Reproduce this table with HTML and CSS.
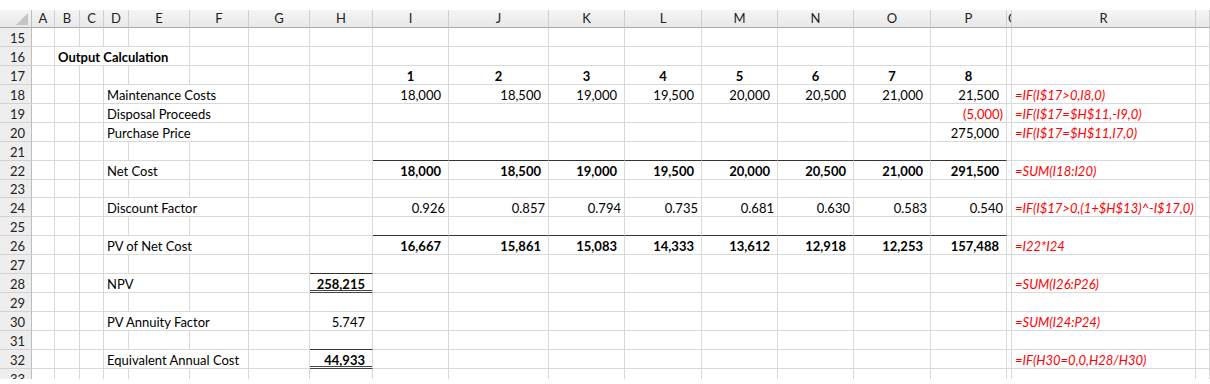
FILE: index.html
```html
<!DOCTYPE html>
<html>
<head>
<meta charset="utf-8">
<link rel="stylesheet" href="styles.css">
</head>
<body>
<div class="frame">
<table class="sheet">
<colgroup>
<col class="c-rh"><col class="c-a"><col class="c-b"><col class="c-c"><col class="c-d"><col class="c-e"><col class="c-f"><col class="c-g"><col class="c-h"><col class="c-i"><col class="c-j"><col class="c-k"><col class="c-l"><col class="c-m"><col class="c-n"><col class="c-o"><col class="c-p"><col class="c-q"><col class="c-r"><col class="c-z">
</colgroup>
<thead>
<tr class="hdr">
<th class="corner"><svg class="tri" width="12" height="12" viewBox="0 0 12 12"><polygon points="12,0 12,12 0,12" fill="#c4c4c4"/></svg></th>
<th>A</th><th>B</th><th>C</th><th>D</th><th>E</th><th>F</th><th>G</th><th>H</th><th>I</th><th>J</th><th>K</th><th>L</th><th>M</th><th>N</th><th>O</th><th>P</th><th class="qh">Q</th><th>R</th><th></th>
</tr>
</thead>
<tbody>
<tr><th>15</th><td></td><td></td><td></td><td></td><td></td><td></td><td></td><td></td><td></td><td></td><td></td><td></td><td></td><td></td><td></td><td></td><td></td><td></td><td></td></tr>
<tr><th>16</th><td></td><td colspan="4" class="b">Output Calculation</td><td></td><td></td><td></td><td></td><td></td><td></td><td></td><td></td><td></td><td></td><td></td><td></td><td></td><td></td></tr>
<tr><th>17</th><td></td><td></td><td></td><td></td><td></td><td></td><td></td><td></td><td class="yr">1</td><td class="yr">2</td><td class="yr">3</td><td class="yr">4</td><td class="yr">5</td><td class="yr">6</td><td class="yr">7</td><td class="yr">8</td><td></td><td></td><td></td></tr>
<tr><th>18</th><td></td><td></td><td></td><td colspan="3">Maintenance Costs</td><td></td><td></td><td class="num">18,000</td><td class="num">18,500</td><td class="num">19,000</td><td class="num">19,500</td><td class="num">20,000</td><td class="num">20,500</td><td class="num">21,000</td><td class="num">21,500</td><td></td><td class="f">=IF(I$17&gt;0,I8,0)</td><td></td></tr>
<tr><th>19</th><td></td><td></td><td></td><td colspan="3">Disposal Proceeds</td><td></td><td></td><td></td><td></td><td></td><td></td><td></td><td></td><td></td><td class="neg">(5,000)</td><td></td><td class="f">=IF(I$17=$H$11,-I9,0)</td><td></td></tr>
<tr><th>20</th><td></td><td></td><td></td><td colspan="3">Purchase Price</td><td></td><td></td><td></td><td></td><td></td><td></td><td></td><td></td><td></td><td class="num">275,000</td><td></td><td class="f">=IF(I$17=$H$11,I7,0)</td><td></td></tr>
<tr><th>21</th><td></td><td></td><td></td><td></td><td></td><td></td><td></td><td></td><td class="bb"></td><td class="bb"></td><td class="bb"></td><td class="bb"></td><td class="bb"></td><td class="bb"></td><td class="bb"></td><td class="bb"></td><td></td><td></td><td></td></tr>
<tr><th>22</th><td></td><td></td><td></td><td colspan="2">Net Cost</td><td></td><td></td><td></td><td class="num b">18,000</td><td class="num b">18,500</td><td class="num b">19,000</td><td class="num b">19,500</td><td class="num b">20,000</td><td class="num b">20,500</td><td class="num b">21,000</td><td class="num b">291,500</td><td></td><td class="f">=SUM(I18:I20)</td><td></td></tr>
<tr><th>23</th><td></td><td></td><td></td><td></td><td></td><td></td><td></td><td></td><td></td><td></td><td></td><td></td><td></td><td></td><td></td><td></td><td></td><td></td><td></td></tr>
<tr><th>24</th><td></td><td></td><td></td><td colspan="3">Discount Factor</td><td></td><td></td><td class="df">0.926</td><td class="df">0.857</td><td class="df">0.794</td><td class="df">0.735</td><td class="df">0.681</td><td class="df">0.630</td><td class="df">0.583</td><td class="df">0.540</td><td></td><td class="f">=IF(I$17&gt;0,(1+$H$13)^-I$17,0)</td><td></td></tr>
<tr><th>25</th><td></td><td></td><td></td><td></td><td></td><td></td><td></td><td></td><td class="bb"></td><td class="bb"></td><td class="bb"></td><td class="bb"></td><td class="bb"></td><td class="bb"></td><td class="bb"></td><td class="bb"></td><td></td><td></td><td></td></tr>
<tr><th>26</th><td></td><td></td><td></td><td colspan="3">PV of Net Cost</td><td></td><td></td><td class="num b">16,667</td><td class="num b">15,861</td><td class="num b">15,083</td><td class="num b">14,333</td><td class="num b">13,612</td><td class="num b">12,918</td><td class="num b">12,253</td><td class="num b">157,488</td><td></td><td class="f">=I22*I24</td><td></td></tr>
<tr><th>27</th><td></td><td></td><td></td><td></td><td></td><td></td><td></td><td class="bb"></td><td></td><td></td><td></td><td></td><td></td><td></td><td></td><td></td><td></td><td></td><td></td></tr>
<tr><th>28</th><td></td><td></td><td></td><td colspan="2">NPV</td><td></td><td></td><td class="num b dbl">258,215</td><td></td><td></td><td></td><td></td><td></td><td></td><td></td><td></td><td></td><td class="f">=SUM(I26:P26)</td><td></td></tr>
<tr><th>29</th><td></td><td></td><td></td><td></td><td></td><td></td><td></td><td></td><td></td><td></td><td></td><td></td><td></td><td></td><td></td><td></td><td></td><td></td><td></td></tr>
<tr><th>30</th><td></td><td></td><td></td><td colspan="3">PV Annuity Factor</td><td></td><td class="num">5.747</td><td></td><td></td><td></td><td></td><td></td><td></td><td></td><td></td><td></td><td class="f">=SUM(I24:P24)</td><td></td></tr>
<tr><th>31</th><td></td><td></td><td></td><td></td><td></td><td></td><td></td><td class="bb"></td><td></td><td></td><td></td><td></td><td></td><td></td><td></td><td></td><td></td><td></td><td></td></tr>
<tr><th>32</th><td></td><td></td><td></td><td colspan="3">Equivalent Annual Cost</td><td></td><td class="num b dbl">44,933</td><td></td><td></td><td></td><td></td><td></td><td></td><td></td><td></td><td></td><td class="f">=IF(H30=0,0,H28/H30)</td><td></td></tr>
<tr><th>33</th><td></td><td></td><td></td><td></td><td></td><td></td><td></td><td></td><td></td><td></td><td></td><td></td><td></td><td></td><td></td><td></td><td></td><td></td><td></td></tr>
</tbody>
</table>
</div>
</body>
</html>
```

FILE: styles.css
```css
html, body {
  margin: 0;
  padding: 0;
  background: #ffffff;
}

.frame {
  margin-top: 10px;
  height: 369px;
  overflow: hidden;
}

.sheet {
  table-layout: fixed;
  border-collapse: separate;
  border-spacing: 0;
  width: 1210px;
  font-family: Lato, "Liberation Sans", sans-serif;
  font-size: 13px;
  color: #000;
}

.c-rh { width: 32px; }
.c-a { width: 23px; }
.c-b { width: 25px; }
.c-c { width: 24px; }
.c-d { width: 25px; }
.c-e { width: 61px; }
.c-f { width: 59px; }
.c-g { width: 61px; }
.c-h { width: 63px; }
.c-i { width: 76px; }
.c-j { width: 100px; }
.c-k { width: 76px; }
.c-l { width: 77px; }
.c-m { width: 76px; }
.c-n { width: 76px; }
.c-o { width: 77px; }
.c-p { width: 76px; }
.c-q { width: 5px; }
.c-r { width: 184px; }
.c-z { width: 14px; }

.sheet tbody tr {
  height: 18.94px;
}

.sheet td,
.sheet th {
  padding: 0 3px;
  border-right: 1px solid #d9d9d9;
  border-bottom: 1px solid #d9d9d9;
  white-space: nowrap;
  overflow: hidden;
  vertical-align: bottom;
  line-height: 15px;
  text-align: left;
  font-weight: normal;
}

.hdr {
  height: 18px;
}

.sheet .hdr th {
  background: linear-gradient(#f5f5f5, #e8e8e8);
  border-right: 1px solid #cfcfcf;
  border-bottom: 1px solid #a9a9a9;
  text-align: center;
  vertical-align: middle;
  color: #222;
  padding: 0;
}

.sheet .hdr th.corner {
  position: relative;
  border-right: 1px solid #bdbdbd;
}

.tri {
  position: absolute;
  right: 3px;
  bottom: 2px;
}

.sheet .hdr th.qh {
  text-align: left;
  padding-left: 1px;
}

.sheet tbody th {
  background: #eeeeee;
  border-right: 1px solid #bdbdbd;
  border-bottom: 1px solid #d2d2d2;
  color: #222;
  text-align: center;
  padding: 0 0 0 4px;
}

.sheet .b { font-weight: bold; }

.sheet .yr {
  font-weight: bold;
  text-align: center;
}

.sheet .num {
  text-align: right;
  padding-right: 7px;
}

.sheet .neg {
  text-align: right;
  padding-right: 3px;
  color: #ff0000;
}

.sheet .df {
  text-align: right;
  padding-right: 3px;
}

.sheet .f {
  color: #ff0000;
  font-style: italic;
  overflow: visible;
}

.sheet td.bb {
  border-bottom-color: #333;
}

.sheet td.dbl {
  border-bottom-color: #444;
  box-shadow: inset 0 -1px #ffffff, inset 0 -2px #444;
}
```
